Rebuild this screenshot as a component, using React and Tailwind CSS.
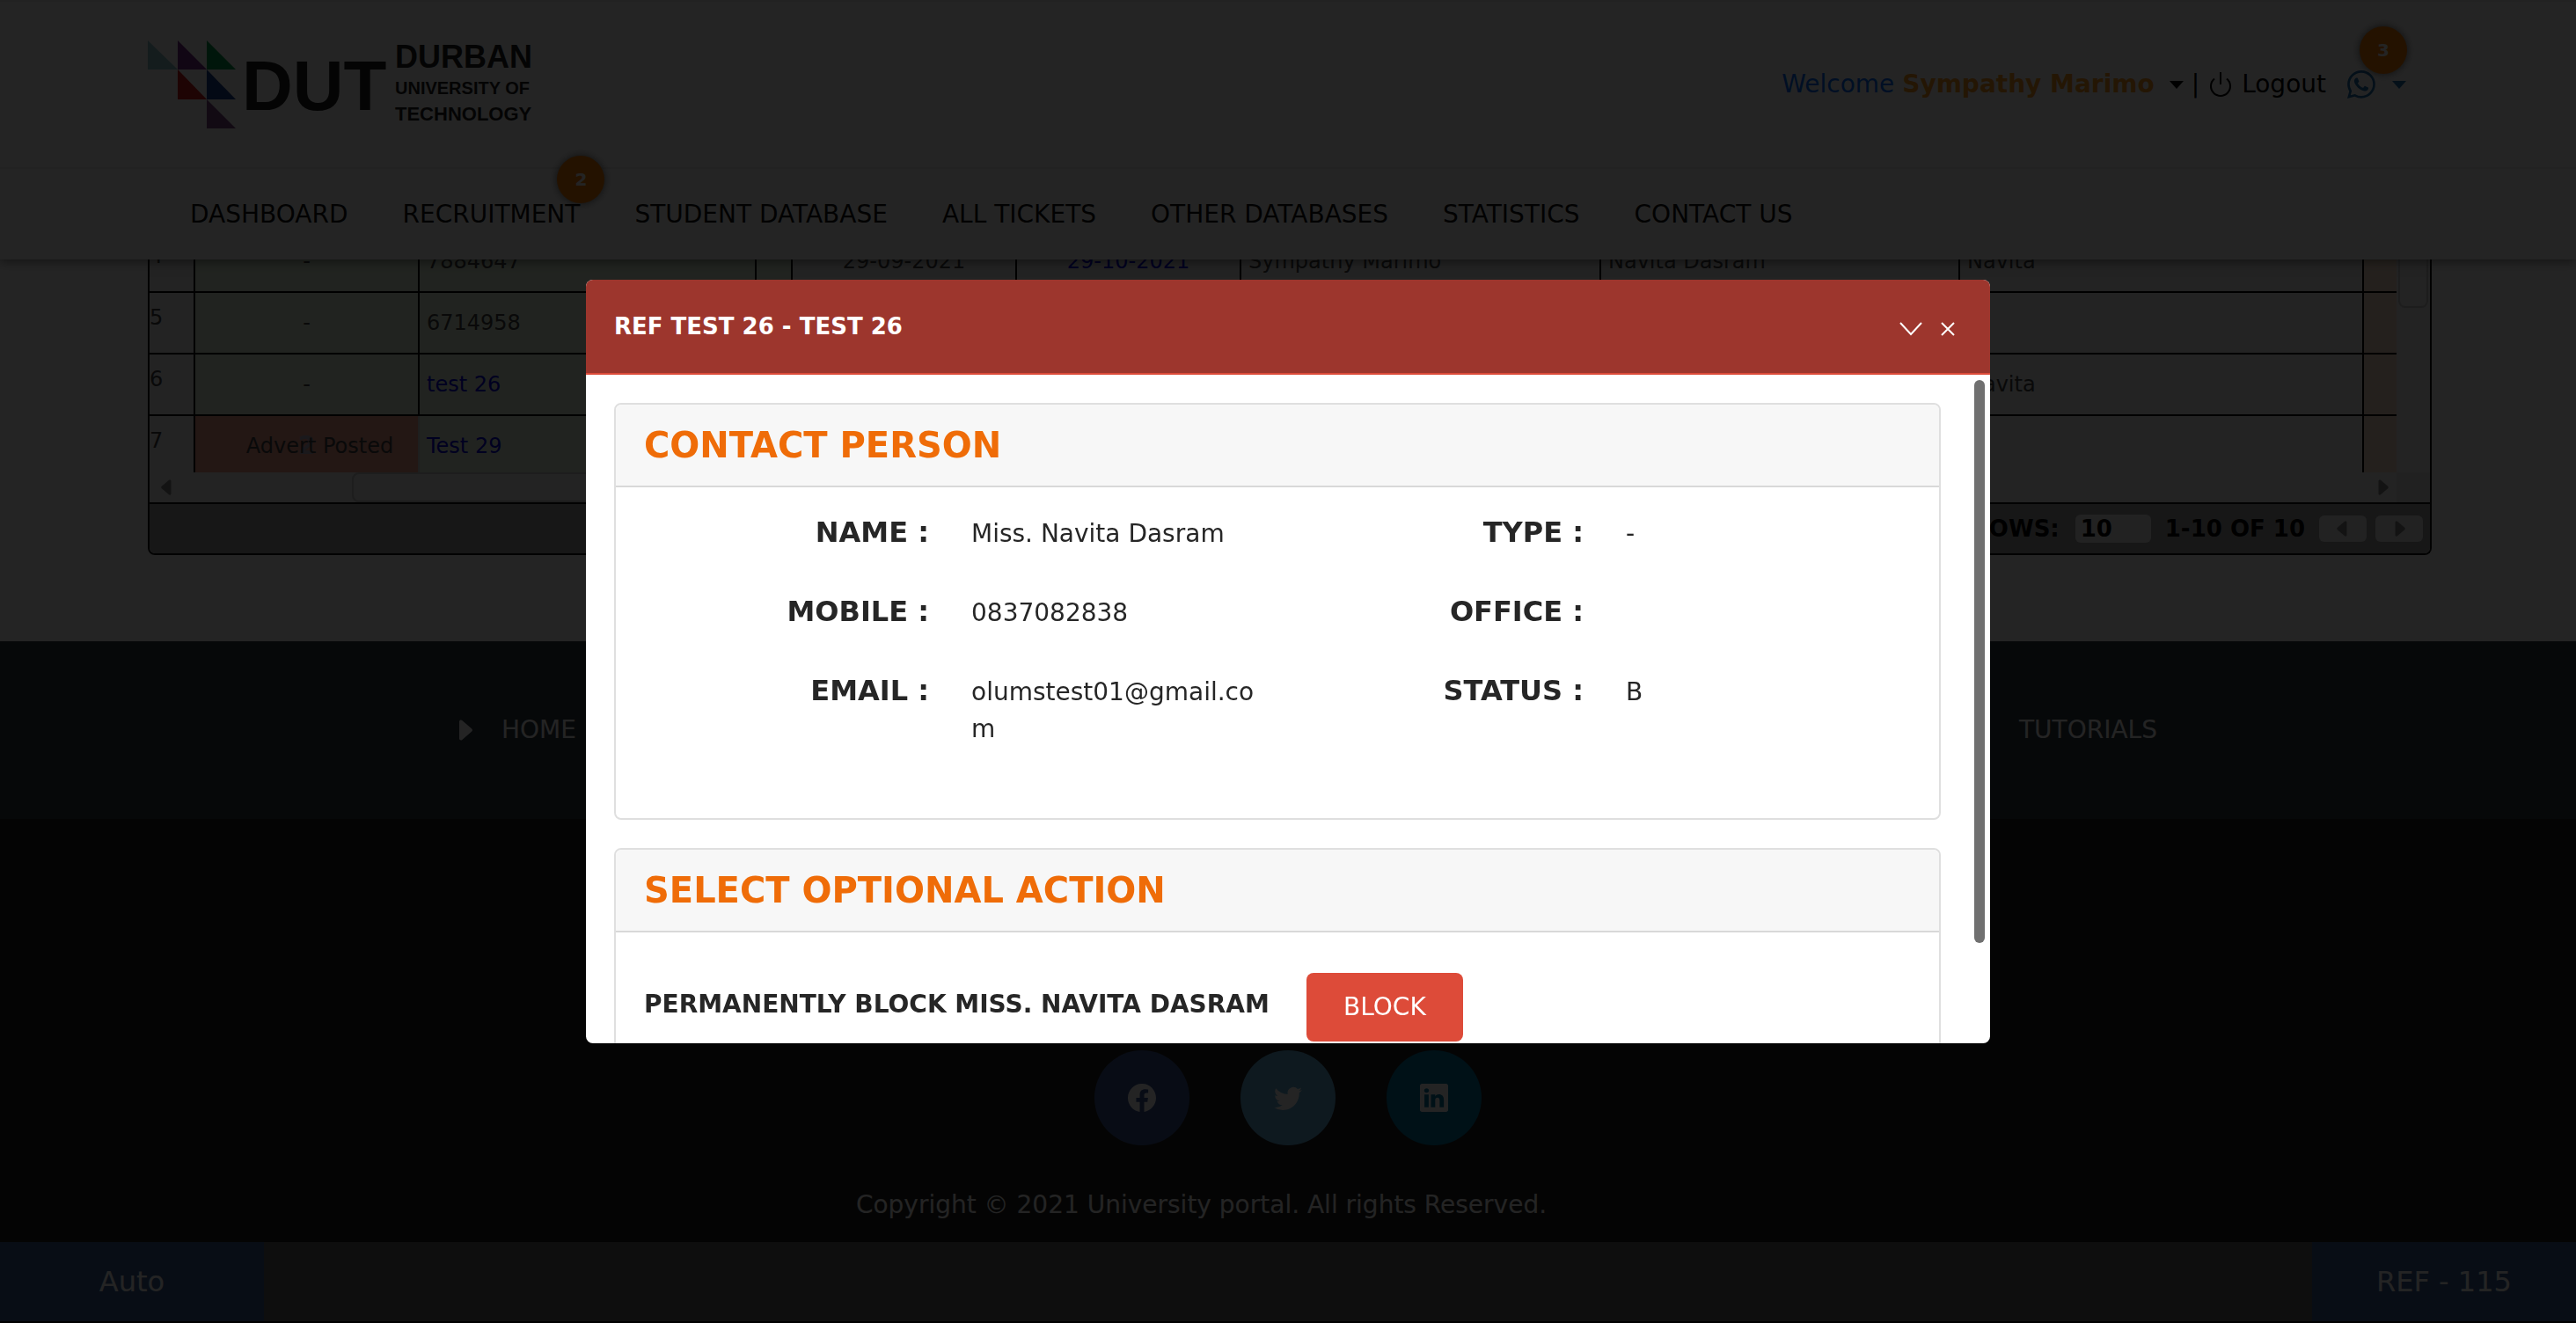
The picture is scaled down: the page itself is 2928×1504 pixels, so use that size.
import {
  BsCaretLeftFill,
  BsCaretRightFill,
  BsFacebook,
  BsLinkedin,
  BsTwitter,
  BsWhatsapp,
} from "react-icons/bs";

const NAV = [
  { label: "DASHBOARD" },
  { label: "RECRUITMENT", badge: 2 },
  { label: "STUDENT DATABASE" },
  { label: "ALL TICKETS" },
  { label: "OTHER DATABASES" },
  { label: "STATISTICS" },
  { label: "CONTACT US" },
];

const ROWS = [
  { no: 4, status: "-", ref: "7884647", opened: "29-09-2021", closes: "29-10-2021", owner: "Sympathy Marimo", contact: "Navita Dasram", agent: "Navita" },
  { no: 5, status: "-", ref: "6714958" },
  { no: 6, status: "-", ref: "test 26", link: true, agent: "Navita" },
  { no: 7, status: "Advert Posted", count: 2, ref: "Test 29", link: true },
];

const DETAILS = [
  ["NAME :", "Miss. Navita Dasram", "TYPE :", "-"],
  ["MOBILE :", "0837082838", "OFFICE :", ""],
  ["EMAIL :", "olumstest01@gmail.com", "STATUS :", "B"],
];

function Logo() {
  return (
    <svg viewBox="0 0 441 100" className="h-[100px] w-[441px]" role="img" aria-label="Durban University of Technology">
      <path d="M0 0V33H34Z" fill="#8fc7cf" />
      <path d="M34 0V33H67Z" fill="#7b2d8b" />
      <path d="M67 0V33H100Z" fill="#009a4e" />
      <path d="M34 33V67H67Z" fill="#d3221f" />
      <path d="M67 33V67H100Z" fill="#1b3f94" />
      <path d="M67 67V100H100Z" fill="#7d4a86" />
      <g fill="#1f1f1f" fontWeight="700" fontFamily="'Liberation Sans Narrow', 'Liberation Sans', sans-serif">
        <text x="107" y="79" fontSize="80">DUT</text>
        <text x="281" y="31" fontSize="36">DURBAN</text>
        <text x="281" y="61" fontSize="20">UNIVERSITY OF</text>
        <text x="281" y="91" fontSize="22">TECHNOLOGY</text>
      </g>
    </svg>
  );
}

function Caret({ className }) {
  return (
    <svg viewBox="0 0 18 9" className={className} aria-hidden="true">
      <path d="M1 0H17L9 9Z" fill="currentColor" />
    </svg>
  );
}

function PowerIcon() {
  return (
    <svg viewBox="0 0 32 32" className="size-8" fill="none" stroke="currentColor" strokeWidth="2" aria-hidden="true">
      <path d="M9 9.5A11 11 0 1 0 23 9.5M16 2V16" />
    </svg>
  );
}

function Badge({ children, className }) {
  return (
    <span
      className={
        "absolute flex size-[54px] items-center justify-center rounded-full bg-[#ff8000] text-xl font-bold text-white shadow-[0_0_10px_rgba(0,0,0,0.6)] " +
        className
      }
    >
      {children}
    </span>
  );
}

function Header() {
  return (
    <header className="relative z-10 bg-white shadow-[0_2px_12px_rgba(0,0,0,0.5)]">
      <div className="flex h-[192px] items-center justify-between border-y-2 border-[#eeeeee] pr-[192px] pl-[168px]">
        <Logo />
        <div className="flex items-center text-[28px] leading-[42px] text-black">
          <button type="button" className="flex items-center">
            <span className="text-[#006bff]">Welcome&nbsp;</span>
            <span className="font-bold text-[#ff9a1f]">Sympathy Marimo</span>
            <Caret className="ml-4 h-[9px] w-[18px]" />
          </button>
          <span className="ml-2">|</span>
          <a href="#logout" className="ml-2 flex items-center gap-2">
            <PowerIcon />
            Logout
          </a>
          <button type="button" aria-label="WhatsApp" className="relative ml-6 flex items-center gap-[18px] text-[#1f6fb2]">
            <BsWhatsapp className="size-8" />
            <Caret className="h-[9px] w-[18px]" />
            <Badge className="-top-[50px] left-[14px]">3</Badge>
          </button>
        </div>
      </div>
      <nav className="flex h-[103px] items-center gap-[62px] pl-[216px]">
        {NAV.map((n) => (
          <a key={n.label} href="#nav" className="relative text-[28px] leading-[42px] text-[#101010]">
            {n.label}
            {n.badge && <Badge className="-top-[46px] -right-[28px]">{n.badge}</Badge>}
          </a>
        ))}
      </nav>
    </header>
  );
}

function Grid() {
  const cell = "h-[70px] border-r-2 border-b-2 border-black px-2 align-middle";
  return (
    <section className="-mt-8 mr-[164px] ml-[168px] overflow-hidden rounded-b-lg border-x-2 border-b-2 border-[#111111] bg-[#f3f3f3]">
      <div className="flex h-[274px] overflow-hidden">
        <table className="h-[280px] flex-1 table-fixed border-separate border-spacing-0 text-2xl leading-8 whitespace-nowrap text-[#444444]">
          <colgroup>
            <col className="w-[52px]" />
            <col className="w-[255px]" />
            <col className="w-[383px]" />
            <col className="w-[41px]" />
            <col className="w-[255px]" />
            <col className="w-[255px]" />
            <col className="w-[409px]" />
            <col className="w-[408px]" />
            <col />
            <col className="w-[37px]" />
          </colgroup>
          <tbody>
            {ROWS.map((r) => (
              <tr key={r.no}>
                <td className="h-[70px] border-r-2 border-b-2 border-black pt-3 align-top">{r.no}</td>
                {r.count ? (
                  <td className="relative h-[70px] border-r-2 border-b-2 border-r-[#d4dcd0] border-b-black bg-[#f3a08f] pl-[30px] text-center">
                    <span className="absolute inset-0 flex items-center justify-center text-[28px] font-bold text-[#b4aec8]">{r.count}</span>
                    <span className="relative">{r.status}</span>
                  </td>
                ) : (
                  <td className={cell + " bg-[#e8f8e0] text-center"}>{r.status}</td>
                )}
                <td className={cell + " bg-[#e8f8e0]"}>
                  {r.link ? <a href="#ref" className="text-[#0000e0]">{r.ref}</a> : r.ref}
                </td>
                <td className={cell + " bg-[#e8f8e0]"} />
                <td className={cell + " text-center"}>{r.opened}</td>
                <td className={cell + " text-center text-[#0000e0]"}>{r.closes}</td>
                <td className={cell}>{r.owner}</td>
                <td className={cell}>{r.contact}</td>
                <td className={cell}>{r.agent}</td>
                <td className="border-b-2 border-black bg-[#ffe4cf]" />
              </tr>
            ))}
          </tbody>
        </table>
        <div className="w-[38px] px-[2px]" aria-hidden="true">
          <div className="h-[87px] rounded-b-lg border-2 border-t-0 border-[#cccccc]" />
        </div>
      </div>
      <div className="flex h-[34px] items-center" aria-hidden="true">
        <BsCaretLeftFill className="mx-2 size-6 text-[#888888]" />
        <div className="ml-[190px] h-[34px] w-[1200px] rounded-lg border-2 border-[#cccccc]" />
        <BsCaretRightFill className="mr-1 ml-auto size-6 text-[#888888]" />
        <div className="h-[34px] w-[38px] bg-[#e9e9e9]" />
      </div>
      <div className="flex h-[58px] items-center justify-end border-t-2 border-[#111111] bg-[#a6a6a6] pr-2 text-[26px] font-bold text-black">
        <label htmlFor="rows">ROWS:</label>
        <input id="rows" defaultValue="10" className="ml-[18px] h-8 w-[86px] rounded-md bg-[#f0f0f0] px-1.5" />
        <span className="ml-4">1-10 OF 10</span>
        <button type="button" aria-label="Previous page" className="ml-4 flex h-[30px] w-[54px] items-center justify-center rounded-md bg-[#f0f0f0] text-[#888888]">
          <BsCaretLeftFill className="size-6" />
        </button>
        <button type="button" aria-label="Next page" className="ml-2.5 flex h-[30px] w-[54px] items-center justify-center rounded-md bg-[#f0f0f0] text-[#888888]">
          <BsCaretRightFill className="size-6" />
        </button>
      </div>
    </section>
  );
}

function Footer() {
  const circle = "flex size-[108px] items-center justify-center rounded-full text-white";
  return (
    <footer className="flex flex-1 flex-col bg-[#222222] text-[28px] leading-[42px] text-white">
      <div className="flex h-[202px] items-center justify-between bg-[#2d3840] pr-[476px] pl-[512px]">
        <a href="#home" className="flex items-center gap-[26px]">
          <BsCaretRightFill className="size-8" />
          HOME
        </a>
        <a href="#tutorials">TUTORIALS</a>
      </div>
      <div className="flex flex-1 flex-col items-center justify-end gap-[47px] pb-[21px]">
        <div className="flex gap-[58px]">
          <a href="#facebook" aria-label="Facebook" className={circle + " bg-[#3b5998]"}>
            <BsFacebook className="size-8" />
          </a>
          <a href="#twitter" aria-label="Twitter" className={circle + " bg-[#64b2dd]"}>
            <BsTwitter className="size-8" />
          </a>
          <a href="#linkedin" aria-label="LinkedIn" className={circle + " bg-[#0077a5]"}>
            <BsLinkedin className="size-8" />
          </a>
        </div>
        <p className="mr-[197px]">Copyright © 2021 University portal. All rights Reserved.</p>
      </div>
      <div className="flex h-[92px] justify-between border-b-2 border-black bg-[#646464] text-[32px]">
        <button type="button" className="w-[300px] bg-[#3b5f98]">Auto</button>
        <button type="button" className="w-[300px] bg-[#3b5f98]">REF - 115</button>
      </div>
    </footer>
  );
}

function Panel({ title, children }) {
  return (
    <section className="rounded-lg border-2 border-[#dfdfdf] bg-white">
      <h2 className="flex h-[94px] items-center rounded-t-md border-b-2 border-[#d8d8d8] bg-[#f7f7f7] px-8 text-[40px] font-bold text-[#ef6c08]">
        {title}
      </h2>
      {children}
    </section>
  );
}

function Modal() {
  return (
    <div className="fixed inset-0 z-20 flex items-center justify-center bg-black/86">
      <div role="dialog" aria-modal="true" aria-labelledby="dialog-title" className="flex max-h-[868px] w-[1596px] max-w-full flex-col overflow-hidden rounded-lg bg-white text-[#262626]">
        <div className="flex h-[108px] shrink-0 items-center justify-between border-b-2 border-[#dd4b39] bg-[#9d362d] pr-10 pl-8 text-white">
          <h1 id="dialog-title" className="text-[26px] font-bold">REF TEST 26 - TEST 26</h1>
          <div className="flex items-center gap-5 pt-1.5">
            <button type="button" aria-label="Collapse">
              <svg viewBox="0 0 28 16" className="h-4 w-7" fill="none" stroke="currentColor" strokeWidth="2">
                <path d="M2 1L14 14L26 1" />
              </svg>
            </button>
            <button type="button" aria-label="Close">
              <svg viewBox="0 0 16 16" className="size-4" fill="none" stroke="currentColor" strokeWidth="2">
                <path d="M1 1L15 15M15 1L1 15" />
              </svg>
            </button>
          </div>
        </div>
        <div className="flex min-h-0">
          <div className="flex min-w-0 flex-1 flex-col gap-8 overflow-hidden py-8 pr-[38px] pl-8">
            <Panel title="CONTACT PERSON">
              <dl className="grid grid-cols-4 gap-y-12 px-2 pt-8 pb-20">
                {DETAILS.flat().map((t, i) =>
                  i % 2 === 0 ? (
                    <dt key={i} className="px-6 text-right text-[32px] leading-[38px] font-bold">{t}</dt>
                  ) : (
                    <dd key={i} className="px-6 text-[28px] leading-[42px] break-all">{t}</dd>
                  )
                )}
              </dl>
            </Panel>
            <Panel title="SELECT OPTIONAL ACTION">
              <div className="flex items-start gap-[42px] px-8 pt-[46px] pb-40">
                <p className="text-[28px] leading-[72px] font-bold">PERMANENTLY BLOCK MISS. NAVITA DASRAM</p>
                <button type="button" className="h-[78px] w-[178px] rounded-lg bg-[#dd4b39] text-[28px] text-white">BLOCK</button>
              </div>
            </Panel>
          </div>
          <div className="w-[18px] shrink-0 pt-1.5" aria-hidden="true">
            <div className="h-[640px] w-3 rounded-full bg-[#707070]" />
          </div>
        </div>
      </div>
    </div>
  );
}

export default function App() {
  return (
    <div className="flex min-h-screen flex-col bg-white font-['DejaVu_Sans',sans-serif]">
      <Header />
      <main className="pb-[98px]">
        <Grid />
      </main>
      <Footer />
      <Modal />
    </div>
  );
}
